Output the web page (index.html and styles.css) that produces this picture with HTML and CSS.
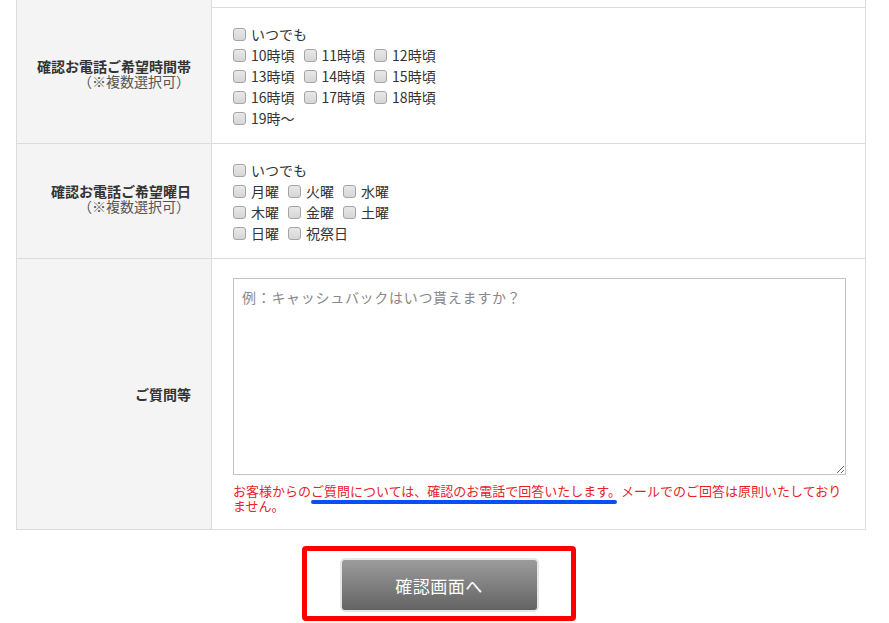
FILE: index.html
```html
<!DOCTYPE html>
<html lang="ja">
<head>
<meta charset="utf-8">
<title>お問い合わせフォーム</title>
<link rel="stylesheet" href="styles.css">
</head>
<body>
<div class="page">
  <div class="form">
    <div class="row row-top">
      <div class="label"></div>
      <div class="field"></div>
    </div>

    <div class="row">
      <div class="label">
        <span class="label-main">確認お電話ご希望時間帯</span>
        <span class="label-sub">（※複数選択可）</span>
      </div>
      <div class="field checks">
        <div class="line"><label class="chk"><input type="checkbox">いつでも</label></div>
        <div class="line">
          <label class="chk"><input type="checkbox">10時頃</label>
          <label class="chk"><input type="checkbox">11時頃</label>
          <label class="chk"><input type="checkbox">12時頃</label>
        </div>
        <div class="line">
          <label class="chk"><input type="checkbox">13時頃</label>
          <label class="chk"><input type="checkbox">14時頃</label>
          <label class="chk"><input type="checkbox">15時頃</label>
        </div>
        <div class="line">
          <label class="chk"><input type="checkbox">16時頃</label>
          <label class="chk"><input type="checkbox">17時頃</label>
          <label class="chk"><input type="checkbox">18時頃</label>
        </div>
        <div class="line"><label class="chk"><input type="checkbox">19時～</label></div>
      </div>
    </div>

    <div class="row">
      <div class="label">
        <span class="label-main">確認お電話ご希望曜日</span>
        <span class="label-sub">（※複数選択可）</span>
      </div>
      <div class="field checks">
        <div class="line"><label class="chk"><input type="checkbox">いつでも</label></div>
        <div class="line">
          <label class="chk"><input type="checkbox">月曜</label>
          <label class="chk"><input type="checkbox">火曜</label>
          <label class="chk"><input type="checkbox">水曜</label>
        </div>
        <div class="line">
          <label class="chk"><input type="checkbox">木曜</label>
          <label class="chk"><input type="checkbox">金曜</label>
          <label class="chk"><input type="checkbox">土曜</label>
        </div>
        <div class="line">
          <label class="chk"><input type="checkbox">日曜</label>
          <label class="chk"><input type="checkbox">祝祭日</label>
        </div>
      </div>
    </div>

    <div class="row">
      <div class="label label-single">
        <span class="label-main">ご質問等</span>
      </div>
      <div class="field question">
        <textarea class="ta" placeholder="例：キャッシュバックはいつ貰えますか？"></textarea>
        <p class="note">お客様からの<span class="mark">ご質問については、確認のお電話で回答いたします。</span>メールでのご回答は原則いたしておりません。</p>
      </div>
    </div>
  </div>

  <div class="actions">
    <div class="highlight">
      <button class="btn" type="button">確認画面へ</button>
    </div>
  </div>
</div>
</body>
</html>
```

FILE: styles.css
```css
* { box-sizing: border-box; }

html, body {
  margin: 0;
  padding: 0;
  background: #fff;
}

body {
  font-family: "Noto Sans CJK JP", "Noto Sans", sans-serif;
  color: #333;
  font-size: 14px;
}

.page {
  padding-left: 16px;
  width: 866px;
}

.form {
  width: 850px;
  border-left: 1px solid #dcdcdc;
  border-right: 1px solid #dcdcdc;
}

.row {
  display: grid;
  grid-template-columns: 195px 1fr;
  border-bottom: 1px solid #dcdcdc;
}

.row-top {
  height: 8px;
}

.label {
  background: #f4f4f4;
  border-right: 1px solid #dcdcdc;
  display: flex;
  flex-direction: column;
  justify-content: center;
  align-items: flex-end;
  padding: 0 20px 4px 0;
  text-align: right;
  line-height: 15px;
}

.label-single {
  padding-bottom: 0;
}

.label-main {
  font-weight: bold;
  font-size: 14px;
  color: #333;
}

.label-sub {
  font-size: 14px;
  color: #555;
  padding-right: 1px;
}

.field {
  padding: 16px 20px 14px 21px;
}

.line {
  display: flex;
  height: 21px;
  align-items: center;
}

.chk {
  display: inline-flex;
  align-items: center;
  margin-right: 9px;
  font-size: 14px;
  color: #333;
  line-height: 21px;
}

.chk input {
  appearance: none;
  -webkit-appearance: none;
  width: 13px;
  height: 13px;
  margin: 0 5px 0 0;
  border: 1px solid #a5a5a5;
  border-radius: 3px;
  background: linear-gradient(#e8e8e8, #d6d6d6);
}

.question {
  padding-top: 19px;
  padding-bottom: 16px;
}

.ta {
  display: block;
  width: 613px;
  height: 197px;
  border: 1px solid #c4c4c4;
  padding: 8px 8px;
  margin: 0;
  font-family: "Noto Sans CJK JP", monospace;
  font-size: 14px;
  letter-spacing: 0.7px;
  color: #333;
  resize: vertical;
}

.ta::placeholder {
  color: #888;
}

.note {
  margin: 8px 0 0;
  font-size: 13px;
  line-height: 15px;
  color: #e8231f;
}

.mark {
  position: relative;
}

.mark::after {
  content: "";
  position: absolute;
  left: 0;
  right: 4px;
  bottom: -4px;
  height: 4px;
  border-radius: 2px;
  background: #0a4ff2;
}

.actions {
  display: flex;
  justify-content: center;
  width: 850px;
  padding: 16px 5px 0 0;
}

.highlight {
  border: 5px solid #ff0000;
  border-radius: 4px;
  padding: 7px 32px 4px 33px;
}

.btn {
  display: block;
  width: 199px;
  height: 54px;
  border: 2px solid #e6e6e6;
  border-radius: 5px;
  background: linear-gradient(#9c9c9c, #636363);
  color: #fff;
  font-family: "Noto Sans CJK JP", sans-serif;
  font-size: 17px;
  letter-spacing: 0.5px;
  padding: 0;
  cursor: pointer;
}
```
